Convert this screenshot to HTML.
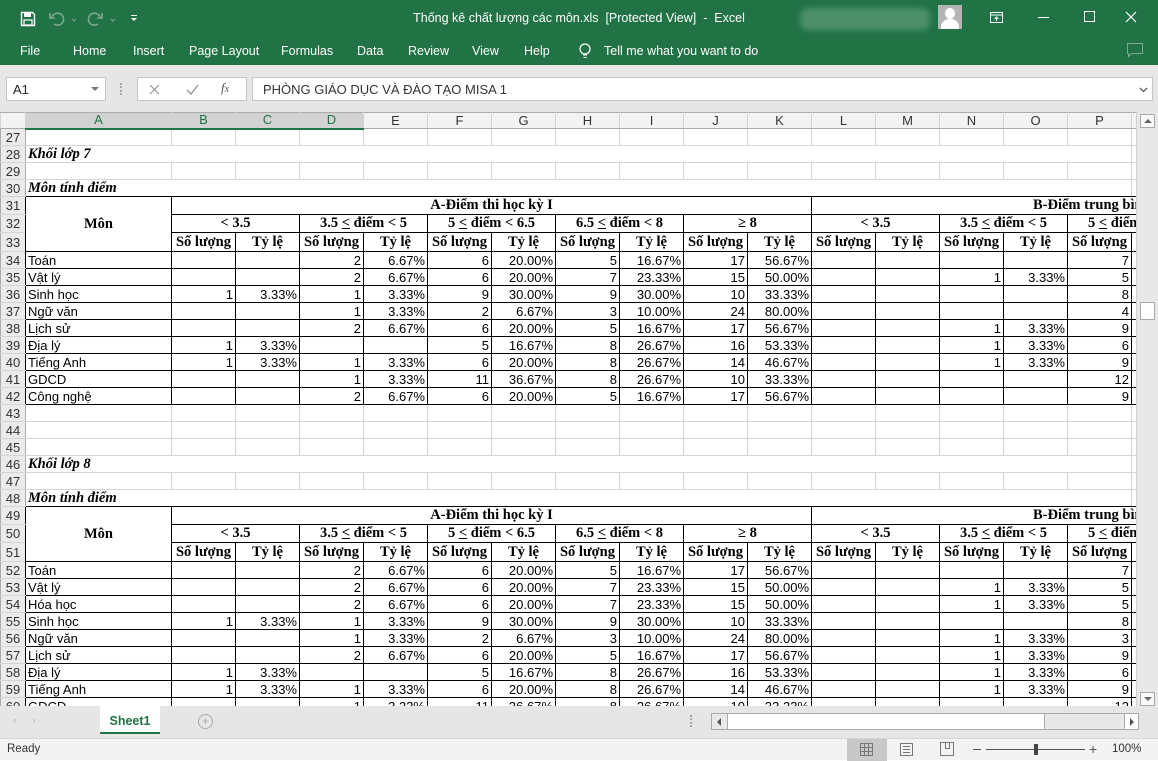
<!DOCTYPE html>
<html><head><meta charset="utf-8">
<style>
*{box-sizing:border-box;margin:0;padding:0}
body{width:1158px;height:760px;overflow:hidden;position:relative;background:#fff;font-family:"Liberation Sans",sans-serif;}
.a{position:absolute}
#title{left:0;top:0;width:1158px;height:37px;background:#217346;color:#fff}
#tabs{left:0;top:37px;width:1158px;height:28px;background:#217346;color:#fff;font-size:12.5px}
#tabs span{position:absolute;top:7px}
#fb{left:0;top:65px;width:1158px;height:47px;background:#e6e6e6}
#grid{left:0;top:112px;width:1136px;height:594px;overflow:hidden;background:#fff}
table{border-collapse:collapse;table-layout:fixed;width:1411px}
td,th{height:17px;line-height:15px;border:1px solid #d4d4d4;white-space:nowrap;overflow:hidden;padding:0 2px;font-size:13px;font-weight:normal}
thead th{height:16px;line-height:14px;background:#f3f3f3;color:#333;text-align:center;border-color:#ababab #d4d4d4}
thead th.s{background:#d2d2d2;border-bottom:2px solid #217346;color:#217346}
tbody th{background:#ebebeb;color:#333;text-align:center;padding:0;border-color:#d4d4d4 #ababab}
td{text-align:right}
td.l{text-align:left}
.k td{border-color:#000}
.k th{border-right-color:#000}
tr.pb td{border-bottom-color:#000}
tr.t th,tr.t td{height:18px}
tr.t3 th,tr.t3 td{height:19px}
td.h{font-family:"Liberation Serif",serif;font-weight:bold;font-size:14.5px;text-align:center;padding:0}
td.i{font-family:"Liberation Serif",serif;font-weight:bold;font-style:italic;font-size:14.5px;text-align:left}
#vs{left:1136px;top:112px;width:22px;height:594px;background:#e8e8e8;border-left:1px solid #d0d0d0}
#st{left:0;top:706px;width:1158px;height:32px;background:#e6e6e6}
#sb{left:0;top:738px;width:1158px;height:22px;background:#f3f3f3;border-top:1px solid #d6d6d6;font-size:11.5px;color:#333}
</style></head><body>
<div id="title" class="a">
 <svg class="a" style="left:20px;top:11px" width="16" height="16" viewBox="0 0 16 16"><path d="M1.5 1.5h11l2 2v11h-13z" fill="none" stroke="#fff" stroke-width="1.4"/><rect x="4" y="2" width="7" height="4" fill="#fff"/><rect x="4" y="9" width="8" height="5" fill="none" stroke="#fff" stroke-width="1.2"/></svg>
 <svg class="a" style="left:48px;top:10px" width="40" height="18" viewBox="0 0 40 18"><path d="M4 7a6 6 0 1 1 2 7" fill="none" stroke="#7fa98f" stroke-width="1.6"/><path d="M2 3v5h5" fill="none" stroke="#7fa98f" stroke-width="1.6"/><path d="M24 9l2 2 2-2" fill="none" stroke="#7fa98f"/></svg>
 <svg class="a" style="left:86px;top:10px" width="40" height="18" viewBox="0 0 40 18"><path d="M14 7a6 6 0 1 0 -2 7" fill="none" stroke="#7fa98f" stroke-width="1.6"/><path d="M16 3v5h-5" fill="none" stroke="#7fa98f" stroke-width="1.6"/><path d="M25 9l2 2 2-2" fill="none" stroke="#7fa98f"/></svg>
 <svg class="a" style="left:130px;top:13px" width="8" height="10"><rect x="1" y="2" width="6" height="1" fill="#fff"/><path d="M1 5h6l-3 3z" fill="#fff"/></svg>
 <div class="a" style="left:0;width:1158px;top:11px;text-align:center;font-size:12.5px">Thống kê chất lượng các môn.xls&nbsp; [Protected View]&nbsp; -&nbsp; Excel</div>
 <div class="a" style="left:800px;top:8px;width:130px;height:22px;background:#4d8f68;border-radius:8px;filter:blur(3px)"></div>
 <div class="a" style="left:938px;top:5px;width:24px;height:24px;background:#b4b4b4;overflow:hidden"><div class="a" style="left:7px;top:3px;width:10px;height:11px;border-radius:50%;background:#fff"></div><div class="a" style="left:3px;top:14px;width:18px;height:14px;border-radius:8px 8px 0 0;background:#fff"></div></div>
 <svg class="a" style="left:989px;top:11px" width="16" height="14"><rect x="1.5" y="1.5" width="12" height="10" fill="none" stroke="#fff"/><path d="M1.5 4h12M7.5 10V6M5.5 8l2-2 2 2" stroke="#fff" fill="none"/></svg>
 <div class="a" style="left:1038px;top:17px;width:11px;height:1px;background:#fff"></div>
 <div class="a" style="left:1084px;top:11px;width:11px;height:11px;border:1px solid #fff"></div>
 <svg class="a" style="left:1125px;top:11px" width="12" height="12"><path d="M1 1l10 10M11 1L1 11" stroke="#fff" stroke-width="1.2"/></svg>
</div>
<div id="tabs" class="a">
 <span style="left:20px">File</span><span style="left:73px">Home</span><span style="left:133px">Insert</span><span style="left:189px">Page Layout</span><span style="left:281px">Formulas</span><span style="left:357px">Data</span><span style="left:408px">Review</span><span style="left:472px">View</span><span style="left:524px">Help</span>
 <svg class="a" style="left:578px;top:5px" width="14" height="18"><circle cx="7" cy="7" r="5" fill="none" stroke="#fff" stroke-width="1.2"/><path d="M5 13h4M5.5 15.5h3" stroke="#fff"/></svg>
 <span style="left:604px">Tell me what you want to do</span>
 <svg class="a" style="left:1126px;top:5px" width="18" height="16"><path d="M1.5 1.5h15v10h-11l-3 3v-3h-1z" fill="none" stroke="#7fa98f"/></svg>
</div>
<div id="fb" class="a">
 <div class="a" style="left:6px;top:12px;width:100px;height:24px;background:#fff;border:1px solid #c6c6c6;font-size:13px;padding:4px 0 0 6px;color:#222">A1<svg class="a" style="left:84px;top:9px" width="8" height="5"><path d="M0 0h8l-4 4z" fill="#777"/></svg></div>
 <div class="a" style="left:120px;top:18px;width:2px;height:12px;border-left:2px dotted #aaa"></div>
 <div class="a" style="left:137px;top:12px;width:110px;height:24px;background:#fff;border:1px solid #c6c6c6"></div>
 <svg class="a" style="left:149px;top:19px" width="11" height="11"><path d="M1 1l9 9M10 1L1 10" stroke="#999" stroke-width="1.2"/></svg>
 <svg class="a" style="left:186px;top:19px" width="13" height="11"><path d="M1 6l4 4 7-9" stroke="#999" stroke-width="1.4" fill="none"/></svg>
 <div class="a" style="left:221px;top:15px;font-family:'Liberation Serif',serif;font-style:italic;font-size:13px;color:#555">f<span style="font-size:10px">x</span></div>
 <div class="a" style="left:252px;top:12px;width:901px;height:24px;background:#fff;border:1px solid #c6c6c6;font-size:13px;padding:4px 0 0 10px;color:#333">PHÒNG GIÁO DỤC VÀ ĐÀO TẠO MISA 1<svg class="a" style="left:886px;top:9px" width="9" height="6"><path d="M1 1l3.5 3.5L8 1" stroke="#666" stroke-width="1.5" fill="none"/></svg></div>
</div>
<div id="grid" class="a">
<table>
<colgroup><col style="width:25px"><col style="width:146px"><col span="20" style="width:64px"></colgroup>
<thead><tr><th style="background:#f3f3f3"></th><th class="s">A</th><th class="s">B</th><th class="s">C</th><th class="s">D</th><th>E</th><th>F</th><th>G</th><th>H</th><th>I</th><th>J</th><th>K</th><th>L</th><th>M</th><th>N</th><th>O</th><th>P</th><th>Q</th><th>R</th><th>S</th><th>T</th><th>U</th></tr></thead>
<tbody>
<tr><th>27</th><td></td><td></td><td></td><td></td><td></td><td></td><td></td><td></td><td></td><td></td><td></td><td></td><td></td><td></td><td></td><td></td><td></td></tr>
<tr><th>28</th><td class="i" colspan="16">Khối lớp 7</td><td></td></tr>
<tr><th>29</th><td></td><td></td><td></td><td></td><td></td><td></td><td></td><td></td><td></td><td></td><td></td><td></td><td></td><td></td><td></td><td></td><td></td></tr>
<tr class="pb"><th>30</th><td class="i" colspan="16">Môn tính điểm</td><td></td></tr>
</tbody>
<tbody class="k">
<tr class="t"><th>31</th><td class="h" rowspan="3">Môn</td><td class="h" colspan="10">A-Điểm thi học kỳ I</td><td class="h" colspan="10">B-Điểm trung bình môn cả năm</td></tr>
<tr class="t"><th>32</th><td class="h" colspan="2">&lt; 3.5</td><td class="h" colspan="2">3.5 <u>&lt;</u> điểm &lt; 5</td><td class="h" colspan="2">5 <u>&lt;</u> điểm &lt; 6.5</td><td class="h" colspan="2">6.5 <u>&lt;</u> điểm &lt; 8</td><td class="h" colspan="2">≥ 8</td><td class="h" colspan="2">&lt; 3.5</td><td class="h" colspan="2">3.5 <u>&lt;</u> điểm &lt; 5</td><td class="h" colspan="2">5 <u>&lt;</u> điểm &lt; 6.5</td></tr>
<tr class="t3"><th>33</th><td class="h">Số lượng</td><td class="h">Tỷ lệ</td><td class="h">Số lượng</td><td class="h">Tỷ lệ</td><td class="h">Số lượng</td><td class="h">Tỷ lệ</td><td class="h">Số lượng</td><td class="h">Tỷ lệ</td><td class="h">Số lượng</td><td class="h">Tỷ lệ</td><td class="h">Số lượng</td><td class="h">Tỷ lệ</td><td class="h">Số lượng</td><td class="h">Tỷ lệ</td><td class="h">Số lượng</td><td class="h">Tỷ lệ</td></tr>
<tr><th>34</th><td class="l">Toán</td><td></td><td></td><td>2</td><td>6.67%</td><td>6</td><td>20.00%</td><td>5</td><td>16.67%</td><td>17</td><td>56.67%</td><td></td><td></td><td></td><td></td><td>7</td><td></td></tr>
<tr><th>35</th><td class="l">Vật lý</td><td></td><td></td><td>2</td><td>6.67%</td><td>6</td><td>20.00%</td><td>7</td><td>23.33%</td><td>15</td><td>50.00%</td><td></td><td></td><td>1</td><td>3.33%</td><td>5</td><td></td></tr>
<tr><th>36</th><td class="l">Sinh học</td><td>1</td><td>3.33%</td><td>1</td><td>3.33%</td><td>9</td><td>30.00%</td><td>9</td><td>30.00%</td><td>10</td><td>33.33%</td><td></td><td></td><td></td><td></td><td>8</td><td></td></tr>
<tr><th>37</th><td class="l">Ngữ văn</td><td></td><td></td><td>1</td><td>3.33%</td><td>2</td><td>6.67%</td><td>3</td><td>10.00%</td><td>24</td><td>80.00%</td><td></td><td></td><td></td><td></td><td>4</td><td></td></tr>
<tr><th>38</th><td class="l">Lịch sử</td><td></td><td></td><td>2</td><td>6.67%</td><td>6</td><td>20.00%</td><td>5</td><td>16.67%</td><td>17</td><td>56.67%</td><td></td><td></td><td>1</td><td>3.33%</td><td>9</td><td></td></tr>
<tr><th>39</th><td class="l">Địa lý</td><td>1</td><td>3.33%</td><td></td><td></td><td>5</td><td>16.67%</td><td>8</td><td>26.67%</td><td>16</td><td>53.33%</td><td></td><td></td><td>1</td><td>3.33%</td><td>6</td><td></td></tr>
<tr><th>40</th><td class="l">Tiếng Anh</td><td>1</td><td>3.33%</td><td>1</td><td>3.33%</td><td>6</td><td>20.00%</td><td>8</td><td>26.67%</td><td>14</td><td>46.67%</td><td></td><td></td><td>1</td><td>3.33%</td><td>9</td><td></td></tr>
<tr><th>41</th><td class="l">GDCD</td><td></td><td></td><td>1</td><td>3.33%</td><td>11</td><td>36.67%</td><td>8</td><td>26.67%</td><td>10</td><td>33.33%</td><td></td><td></td><td></td><td></td><td>12</td><td></td></tr>
<tr><th>42</th><td class="l">Công nghệ</td><td></td><td></td><td>2</td><td>6.67%</td><td>6</td><td>20.00%</td><td>5</td><td>16.67%</td><td>17</td><td>56.67%</td><td></td><td></td><td></td><td></td><td>9</td><td></td></tr>
</tbody>
<tbody>
<tr><th>43</th><td></td><td></td><td></td><td></td><td></td><td></td><td></td><td></td><td></td><td></td><td></td><td></td><td></td><td></td><td></td><td></td><td></td></tr>
<tr><th>44</th><td></td><td></td><td></td><td></td><td></td><td></td><td></td><td></td><td></td><td></td><td></td><td></td><td></td><td></td><td></td><td></td><td></td></tr>
<tr><th>45</th><td></td><td></td><td></td><td></td><td></td><td></td><td></td><td></td><td></td><td></td><td></td><td></td><td></td><td></td><td></td><td></td><td></td></tr>
<tr><th>46</th><td class="i" colspan="16">Khối lớp 8</td><td></td></tr>
<tr><th>47</th><td></td><td></td><td></td><td></td><td></td><td></td><td></td><td></td><td></td><td></td><td></td><td></td><td></td><td></td><td></td><td></td><td></td></tr>
<tr class="pb"><th>48</th><td class="i" colspan="16">Môn tính điểm</td><td></td></tr>
</tbody>
<tbody class="k">
<tr class="t"><th>49</th><td class="h" rowspan="3">Môn</td><td class="h" colspan="10">A-Điểm thi học kỳ I</td><td class="h" colspan="10">B-Điểm trung bình môn cả năm</td></tr>
<tr class="t"><th>50</th><td class="h" colspan="2">&lt; 3.5</td><td class="h" colspan="2">3.5 <u>&lt;</u> điểm &lt; 5</td><td class="h" colspan="2">5 <u>&lt;</u> điểm &lt; 6.5</td><td class="h" colspan="2">6.5 <u>&lt;</u> điểm &lt; 8</td><td class="h" colspan="2">≥ 8</td><td class="h" colspan="2">&lt; 3.5</td><td class="h" colspan="2">3.5 <u>&lt;</u> điểm &lt; 5</td><td class="h" colspan="2">5 <u>&lt;</u> điểm &lt; 6.5</td></tr>
<tr class="t3"><th>51</th><td class="h">Số lượng</td><td class="h">Tỷ lệ</td><td class="h">Số lượng</td><td class="h">Tỷ lệ</td><td class="h">Số lượng</td><td class="h">Tỷ lệ</td><td class="h">Số lượng</td><td class="h">Tỷ lệ</td><td class="h">Số lượng</td><td class="h">Tỷ lệ</td><td class="h">Số lượng</td><td class="h">Tỷ lệ</td><td class="h">Số lượng</td><td class="h">Tỷ lệ</td><td class="h">Số lượng</td><td class="h">Tỷ lệ</td></tr>
<tr><th>52</th><td class="l">Toán</td><td></td><td></td><td>2</td><td>6.67%</td><td>6</td><td>20.00%</td><td>5</td><td>16.67%</td><td>17</td><td>56.67%</td><td></td><td></td><td></td><td></td><td>7</td><td></td></tr>
<tr><th>53</th><td class="l">Vật lý</td><td></td><td></td><td>2</td><td>6.67%</td><td>6</td><td>20.00%</td><td>7</td><td>23.33%</td><td>15</td><td>50.00%</td><td></td><td></td><td>1</td><td>3.33%</td><td>5</td><td></td></tr>
<tr><th>54</th><td class="l">Hóa học</td><td></td><td></td><td>2</td><td>6.67%</td><td>6</td><td>20.00%</td><td>7</td><td>23.33%</td><td>15</td><td>50.00%</td><td></td><td></td><td>1</td><td>3.33%</td><td>5</td><td></td></tr>
<tr><th>55</th><td class="l">Sinh học</td><td>1</td><td>3.33%</td><td>1</td><td>3.33%</td><td>9</td><td>30.00%</td><td>9</td><td>30.00%</td><td>10</td><td>33.33%</td><td></td><td></td><td></td><td></td><td>8</td><td></td></tr>
<tr><th>56</th><td class="l">Ngữ văn</td><td></td><td></td><td>1</td><td>3.33%</td><td>2</td><td>6.67%</td><td>3</td><td>10.00%</td><td>24</td><td>80.00%</td><td></td><td></td><td>1</td><td>3.33%</td><td>3</td><td></td></tr>
<tr><th>57</th><td class="l">Lịch sử</td><td></td><td></td><td>2</td><td>6.67%</td><td>6</td><td>20.00%</td><td>5</td><td>16.67%</td><td>17</td><td>56.67%</td><td></td><td></td><td>1</td><td>3.33%</td><td>9</td><td></td></tr>
<tr><th>58</th><td class="l">Địa lý</td><td>1</td><td>3.33%</td><td></td><td></td><td>5</td><td>16.67%</td><td>8</td><td>26.67%</td><td>16</td><td>53.33%</td><td></td><td></td><td>1</td><td>3.33%</td><td>6</td><td></td></tr>
<tr><th>59</th><td class="l">Tiếng Anh</td><td>1</td><td>3.33%</td><td>1</td><td>3.33%</td><td>6</td><td>20.00%</td><td>8</td><td>26.67%</td><td>14</td><td>46.67%</td><td></td><td></td><td>1</td><td>3.33%</td><td>9</td><td></td></tr>
<tr><th>60</th><td class="l">GDCD</td><td></td><td></td><td>1</td><td>3.33%</td><td>11</td><td>36.67%</td><td>8</td><td>26.67%</td><td>10</td><td>33.33%</td><td></td><td></td><td></td><td></td><td>12</td><td></td></tr>
</tbody>
</table>
</div>
<div id="vs" class="a">
 <div class="a" style="left:3px;top:2px;width:15px;height:14px;border:1px solid #aaa;background:#f8f8f8"><svg class="a" style="left:3px;top:4px" width="8" height="5"><path d="M0 4h8L4 0z" fill="#666"/></svg></div>
 <div class="a" style="left:3px;top:190px;width:15px;height:18px;border:1px solid #aaa;background:#fff"></div>
 <div class="a" style="left:3px;top:580px;width:15px;height:14px;border:1px solid #aaa;background:#f8f8f8"><svg class="a" style="left:3px;top:4px" width="8" height="5"><path d="M0 0h8L4 4z" fill="#666"/></svg></div>
</div>
<div id="st" class="a">
 <div class="a" style="left:13px;top:9px;font-size:11px;color:#bbb">‹&nbsp;&nbsp;&nbsp;&nbsp;&nbsp;›</div>
 <div class="a" style="left:100px;top:0;width:60px;height:28px;background:#fff;border-bottom:2px solid #217346;font-size:12.5px;font-weight:bold;color:#217346;text-align:center;padding-top:8px">Sheet1</div>
 <div class="a" style="left:198px;top:8px;width:15px;height:15px;border:1px solid #aaa;border-radius:50%;color:#aaa;font-size:12px;line-height:13px;text-align:center">+</div>
 <div class="a" style="left:690px;top:9px;height:12px;border-left:2px dotted #aaa"></div>
 <div class="a" style="left:711px;top:7px;width:428px;height:17px;border:1px solid #aaa;background:#e8e8e8">
  <div class="a" style="left:15px;top:0;width:318px;height:15px;background:#fff;border-left:1px solid #aaa;border-right:1px solid #aaa"></div>
  <svg class="a" style="left:5px;top:4px" width="5" height="8"><path d="M4 0v8L0 4z" fill="#555"/></svg>
  <div class="a" style="left:412px;top:0;width:14px;height:15px;border-left:1px solid #aaa;background:#fff"><svg class="a" style="left:5px;top:4px" width="5" height="8"><path d="M0 0v8l4-4z" fill="#555"/></svg></div>
 </div>
</div>
<div id="sb" class="a">
 <div class="a" style="left:7px;top:4px">Ready</div>
 <div class="a" style="left:847px;top:0;width:40px;height:22px;background:#c8c8c8"></div>
 <svg class="a" style="left:860px;top:4px" width="13" height="13"><path d="M.5 .5h12v12H.5zM4.5 .5v12M8.5 .5v12M.5 4.5h12M.5 8.5h12" fill="none" stroke="#777"/></svg>
 <svg class="a" style="left:900px;top:4px" width="13" height="13"><path d="M.5 .5h12v12H.5zM3 3.5h7M3 6.5h7M3 9.5h7" fill="none" stroke="#777"/></svg>
 <svg class="a" style="left:940px;top:3px" width="14" height="14"><path d="M.5 .5h13v13H.5zM5.5 .5v6h4v-6" fill="none" stroke="#777"/></svg>
 <div class="a" style="left:973px;top:10px;width:8px;height:1px;background:#555"></div>
 <div class="a" style="left:986px;top:10px;width:99px;height:1px;background:#555"></div>
 <div class="a" style="left:1034px;top:5px;width:4px;height:11px;background:#444"></div>
 <div class="a" style="left:1089px;top:2px;font-size:14px;color:#555">+</div>
 <div class="a" style="left:1112px;top:4px">100%</div>
</div>
</body></html>
